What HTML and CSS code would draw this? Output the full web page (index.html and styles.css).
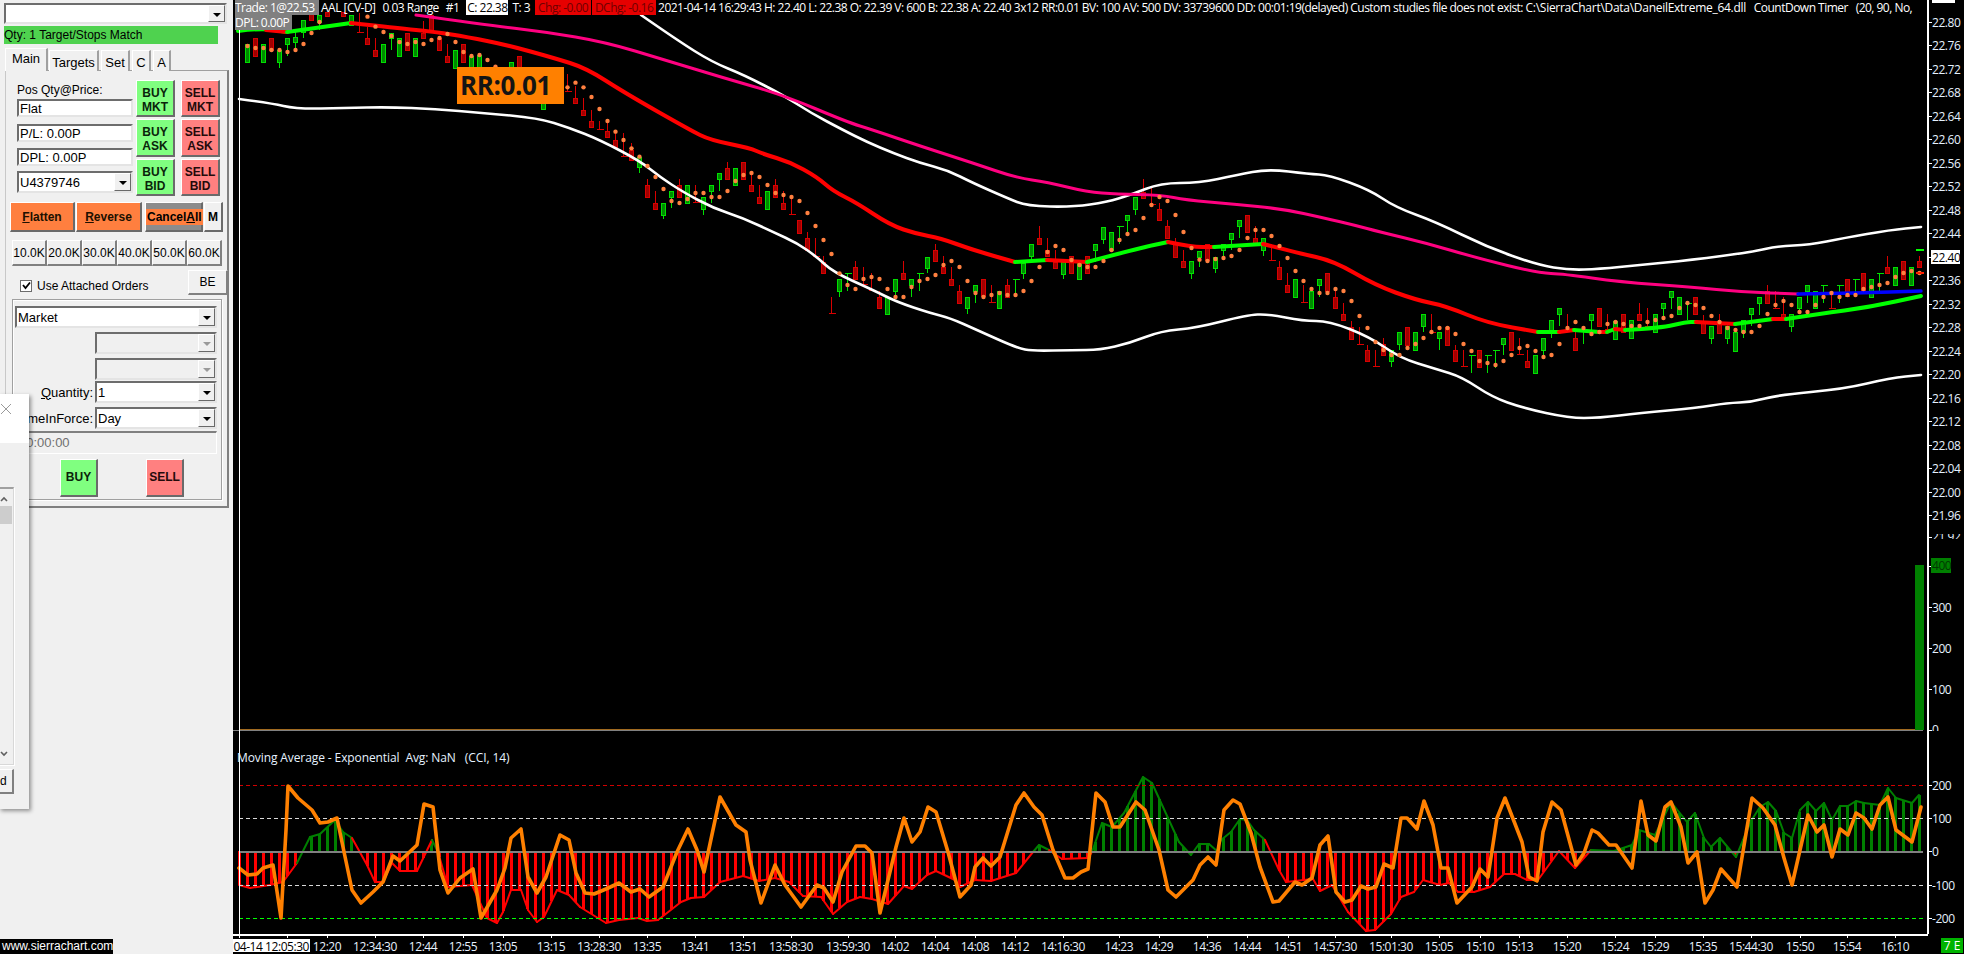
FILE: index.html
```html
<!DOCTYPE html>
<html lang="en">
<head>
<meta charset="utf-8">
<title>Sierra Chart AAL</title>
<link rel="stylesheet" href="styles.css">
</head>
<body>
<aside class="side">
  <div class="combo combo-top"><span class="combo-text"></span><span class="arrow"></span></div>
  <div class="status">Qty: 1 Target/Stops Match</div>
  <div class="tabs">
    <span class="tab tab-active tab-main">Main</span>
    <span class="tab tab-targets">Targets</span>
    <span class="tab tab-set">Set</span>
    <span class="tab tab-c">C</span>
    <span class="tab tab-a">A</span>
  </div>
  <div class="tabpanel">
    <div class="trade">
      <div class="trade-left">
        <div class="pos-label">Pos Qty@Price:</div>
        <div class="field field-flat">Flat</div>
        <div class="field field-pl">P/L: 0.00P</div>
        <div class="field field-dpl">DPL: 0.00P</div>
        <div class="combo combo-acct"><span class="combo-text">U4379746</span><span class="arrow"></span></div>
      </div>
      <div class="btn-col">
        <div class="tbtn buy">BUY<br>MKT</div>
        <div class="tbtn buy">BUY<br>ASK</div>
        <div class="tbtn buy">BUY<br>BID</div>
      </div>
      <div class="btn-col">
        <div class="tbtn sell">SELL<br>MKT</div>
        <div class="tbtn sell">SELL<br>ASK</div>
        <div class="tbtn sell">SELL<br>BID</div>
      </div>
    </div>
    <div class="actions">
      <div class="abtn orange flatten"><u>F</u>latten</div>
      <div class="abtn orange reverse"><u>R</u>everse</div>
      <div class="abtn cancel"><span class="cancel-text">Cancel<u>A</u>ll</span></div>
      <div class="abtn mbtn">M</div>
    </div>
    <div class="sizes">
      <div class="size">10.0K</div><div class="size">20.0K</div><div class="size">30.0K</div>
      <div class="size">40.0K</div><div class="size">50.0K</div><div class="size">60.0K</div>
    </div>
    <div class="attach">
      <span class="check"><svg width="9" height="9" viewBox="0 0 9 9"><path d="M1 4l2.5 3L8 1.5" fill="none" stroke="#000" stroke-width="1.8"/></svg></span>
      <span class="attach-label">Use Attached Orders</span>
      <div class="size be">BE</div>
    </div>
    <div class="group">
      <div class="combo combo-market"><span class="combo-text">Market</span><span class="arrow"></span></div>
      <div class="row"><div class="combo combo-small off"><span class="combo-text"></span><span class="arrow"></span></div></div>
      <div class="row"><div class="combo combo-small off"><span class="combo-text"></span><span class="arrow"></span></div></div>
      <div class="row row-qty"><span class="row-label"><u>Q</u>uantity:</span><div class="combo combo-small"><span class="combo-text">1</span><span class="arrow"></span></div></div>
      <div class="row row-tif"><span class="row-label">TimeInForce:</span><div class="combo combo-small"><span class="combo-text">Day</span><span class="arrow"></span></div></div>
      <div class="time">00:00:00</div>
      <div class="send">
        <div class="tbtn buy big">BUY</div>
        <div class="tbtn sell big">SELL</div>
      </div>
    </div>
  </div>
  <div class="dialog">
    <div class="dialog-head">
      <svg class="dialog-x" width="12" height="12" viewBox="0 0 12 12"><path d="M1 1l10 10M11 1L1 11" stroke="#9a9a9a" stroke-width="1" fill="none"/></svg>
    </div>
    <div class="dialog-body">
      <div class="dialog-list">
        <svg class="chev" width="8" height="6" viewBox="0 0 8 6"><path d="M1 5l3-3 3 3" stroke="#606060" stroke-width="1.6" fill="none"/></svg>
        <div class="thumb"></div>
        <svg class="chev chev-down" width="8" height="6" viewBox="0 0 8 6"><path d="M1 1l3 3 3-3" stroke="#606060" stroke-width="1.6" fill="none"/></svg>
      </div>
      <div class="dialog-btn">d</div>
    </div>
  </div>
  <div class="brand">www.sierrachart.com</div>
</aside>
<main class="chart">
  <svg id="plot" class="plot" width="1731" height="954" viewBox="233 0 1731 954"></svg>
  <div class="head">
    <span class="h-gray h-trade">Trade: 1@22.53</span>
    <span class="h-aal">AAL [CV-D]</span>
    <span class="h-range">0.03 Range</span>
    <span class="h-num">#1</span>
    <span class="h-close">C: 22.38</span>
    <span class="h-t">T: 3</span>
    <span class="h-chg">Chg: -0.00</span>
    <span class="h-chg h-dchg">DChg: -0.16</span>
    <span class="h-rest">2021-04-14 16:29:43 H: 22.40 L: 22.38 O: 22.39 V: 600 B: 22.38 A: 22.40 3x12 RR:0.01 BV: 100 AV: 500 DV: 33739600 DD: 00:01:19(delayed) Custom studies file does not exist: <span class="h-path">C:\SierraChart\Data\DaneilExtreme_64.dll</span>&nbsp;&nbsp; CountDown Timer&nbsp;&nbsp; (20, 90, No,</span>
  </div>
  <div class="h-gray h-dpl">DPL: 0.00P</div>
  <div class="rr">RR:0.01</div>
  <div class="study">Moving Average - Exponential&nbsp; Avg: NaN&nbsp;&nbsp; (CCI, 14)</div>
  <div class="price-flag"></div>
  <div class="corner">7 E</div>
</main>
<script src="chart.js"></script>
</body>
</html>
```
FILE: styles.css
```css
* { box-sizing: border-box; }
html, body { margin: 0; padding: 0; }
body { display: flex; width: 1964px; height: 954px; overflow: hidden; background: #000; font: 12px "Liberation Sans", Arial, sans-serif; color: #000; }
.side { position: relative; flex: 0 0 233px; height: 954px; background: #f0f0f0; display: flex; flex-direction: column; align-items: flex-start; overflow: hidden; }
u { text-decoration: underline; }

.combo { display: flex; align-items: stretch; background: #fff; border: 2px solid #6d6d6d; border-right-color: #e4e4e4; border-bottom-color: #e4e4e4; }
.combo-text { flex: 1; padding: 2px 0 0 1px; font-size: 13px; line-height: 16px; white-space: nowrap; }
.arrow { position: relative; flex: 0 0 17px; background: #f0f0f0; border: 1px solid #fff; border-right-color: #696969; border-bottom-color: #696969; }
.arrow::after { content: ""; position: absolute; left: 4px; top: 7px; border: 4px solid transparent; border-top: 4px solid #000; border-bottom: 0; }
.off { background: #f0f0f0; }
.off .arrow::after { border-top-color: #9a9a9a; }
.combo-top { margin: 3px 0 0 4px; width: 223px; height: 21px; }
.status { margin: 2px 0 0 4px; width: 214px; height: 18px; background: #4fd24f; font-size: 12px; line-height: 18px; white-space: nowrap; }

.tabs { display: flex; align-items: flex-end; height: 22px; margin: 5px 0 0 5px; gap: 1px; position: relative; z-index: 1; }
.tab { height: 21px; background: #f0f0f0; border: 1px solid #a0a0a0; border-top-color: #fff; border-left-color: #fff; border-bottom: 0; border-right-width: 2px; font-size: 13px; line-height: 23px; text-align: center; }
.tab-active { height: 23px; line-height: 20px; }
.tab-main { width: 43px; }
.tab-targets { width: 50px; }
.tab-set { width: 29px; margin-left: 1px; }
.tab-c { width: 19px; margin-left: 1px; }
.tab-a { width: 18px; margin-left: 1px; }

.tabpanel { margin: -1px 0 0 5px; width: 224px; height: 438px; border: 1px solid #c8c8c8; border-right: 2px solid #808080; border-bottom: 2px solid #808080; border-top-color: #a0a0a0; display: flex; flex-direction: column; align-items: flex-start; }

.trade { display: flex; margin: 9px 0 0 11px; height: 116px; }
.trade-left { width: 116px; display: flex; flex-direction: column; }
.pos-label { height: 19px; font-size: 12px; line-height: 21px; }
.field { width: 116px; height: 18px; background: #fff; border: 2px solid #6d6d6d; border-right-color: #e4e4e4; border-bottom-color: #e4e4e4; font-size: 13px; line-height: 15px; padding-left: 1px; white-space: nowrap; }
.field-pl { margin-top: 7px; }
.field-dpl { margin-top: 6px; }
.combo-acct { margin-top: 5px; width: 116px; height: 22px; }
.btn-col { display: flex; flex-direction: column; gap: 2px; width: 39px; margin-left: 3px; }
.btn-col + .btn-col { margin-left: 6px; }
.tbtn { height: 37.5px; border: 1px solid #fff; border-right: 2px solid #6a6a6a; border-bottom: 2px solid #6a6a6a; font: bold 12px/14px "Liberation Sans", Arial, sans-serif; text-align: center; padding-top: 5px; }
.buy { background: #80ff80; color: #0a240a; }
.sell { background: #ff8080; color: #240a0a; }

.actions { display: flex; margin: 6px 0 0 4px; height: 30px; }
.abtn { height: 30px; border: 1px solid #fff; border-right: 2px solid #6a6a6a; border-bottom: 2px solid #6a6a6a; font: bold 12px/28px "Liberation Sans", Arial, sans-serif; text-align: center; background: #f0f0f0; }
.orange { background: #ff7f3f; color: #201000; }
.flatten { width: 65px; margin-right: 1px; }
.reverse { width: 66px; margin-right: 3px; }
.cancel { width: 58px; margin-right: 1px; background: #8c8c8c; }
.cancel-text { background: #ff7f3f; padding: 1px 1px; }
.mbtn { width: 19px; }

.sizes { display: flex; margin: 8px 0 0 6px; }
.size { width: 35px; height: 26px; background: #f0f0f0; border: 1px solid #fff; border-right: 2px solid #808080; border-bottom: 2px solid #808080; font-size: 12px; line-height: 25px; text-align: center; white-space: nowrap; }

.attach { position: relative; display: flex; align-items: center; width: 216px; margin: 4px 0 0 6px; height: 25px; }
.check { width: 12px; height: 12px; margin: 6px 0 0 8px; background: #fff; border: 1px solid #6d6d6d; display: flex; align-items: center; justify-content: center; }
.attach-label { margin: 6px 0 0 5px; font-size: 12px; }
.be { width: 40px; height: 25px; margin-left: auto; line-height: 22px; }

.group { width: 210px; height: 201px; margin: 4px 0 0 6px; border: 1px solid #a0a0a0; box-shadow: inset 1px 1px 0 #fff, 1px 1px 0 #fff; padding: 6px 0 0 2px; display: flex; flex-direction: column; }
.combo-market { width: 202px; height: 22px; }
.row { display: flex; justify-content: flex-end; align-items: center; gap: 2px; width: 202px; margin-top: 4px; }
.row-qty { margin-top: 1px; }
.row-label { font-size: 13px; white-space: nowrap; }
.combo-small { width: 122px; height: 22px; flex: none; }
.time { width: 202px; height: 23px; margin-top: 2px; border: 1px solid #c8c8c8; border-right-color: #fff; border-bottom-color: #fff; border-top: 2px solid #808080; color: #6f6f6f; font-size: 13px; line-height: 20px; padding-left: 3px; }
.send { display: flex; margin-top: 5px; padding-left: 45px; gap: 48px; }
.big { width: 38px; height: 38px; padding-top: 10px; font-size: 12px; }

.dialog { position: absolute; left: -1px; top: 394px; width: 30px; height: 415px; background: #f0f0f0; box-shadow: 2px 2px 4px rgba(0,0,0,.4); display: flex; flex-direction: column; overflow: hidden; }
.dialog-head { height: 49px; background: #fff; position: relative; }
.dialog-x { position: absolute; left: 1px; top: 9px; }
.dialog-body { padding-top: 44px; display: flex; flex-direction: column; }
.dialog-list { position: relative; width: 15px; height: 278px; border: 1px solid #d8d8d8; border-left: 0; border-top: 2px solid #a0a0a0; background: #f0f0f0; box-shadow: 1px 1px 0 #fff; }
.chev { position: absolute; left: 1px; top: 7px; }
.chev-down { top: auto; bottom: 7px; }
.thumb { position: absolute; left: 0; top: 17px; width: 13px; height: 18px; background: #cdcdcd; }
.dialog-btn { width: 15px; height: 25px; margin-top: 4px; border: 1px solid #fff; border-left: 0; border-right: 2px solid #808080; border-bottom: 2px solid #808080; font-size: 12px; line-height: 22px; padding-left: 1px; }

.brand { position: absolute; left: 0; top: 939px; width: 113px; height: 15px; background: #000; color: #fff; font-size: 12px; line-height: 15px; white-space: nowrap; padding-left: 2px; }

.chart { position: relative; flex: 1; height: 954px; background: #000; overflow: hidden; }
.plot { display: block; }
.plot text { font: 12px "Open Sans", sans-serif; fill: #e6f2ff; letter-spacing: -.45px; }
.plot .tm { text-anchor: middle; fill: #e8f2ff; }
.plot .t-first { fill: #000; text-anchor: end; }

.head { position: absolute; left: 2px; top: 0; width: 1692px; height: 16px; overflow: hidden; display: flex; color: #fff; font: 12px/15px "Open Sans", sans-serif; letter-spacing: -.52px; white-space: pre; }
.head > span { flex: none; }
.h-gray { background: #808080; color: #fff; }
.h-trade { width: 84px; height: 15px; }
.h-aal { margin-left: 2px; }
.h-range { margin-left: 7px; }
.h-num { margin-left: 7px; }
.h-close { margin-left: 7px; width: 42px; height: 15px; background: #fff; color: #000; text-align: center; }
.h-t { margin-left: 4px; }
.h-chg { margin-left: 5px; width: 56px; height: 15px; background: #e60000; color: #700000; text-align: center; }
.h-dchg { margin-left: 1px; width: 64px; }
.h-rest { margin-left: 2px; }
.h-path { letter-spacing: -.28px; }
.h-dpl { position: absolute; left: 2px; top: 15px; width: 57px; height: 15px; font: 12px/15px "Open Sans", sans-serif; letter-spacing: -.52px; }

.rr { position: absolute; left: 224px; top: 67px; width: 107px; height: 37px; background: #ff8000; color: #141414; font: 700 26px/36px "Open Sans", sans-serif; letter-spacing: -.4px; padding-left: 3px; white-space: nowrap; }
.study { position: absolute; left: 4px; top: 750px; color: #e6f2ff; font: 12px/16px "Open Sans", sans-serif; letter-spacing: -.1px; white-space: pre; }
.price-flag { position: absolute; left: 1699px; top: 0; width: 23px; height: 3px; background: #fff; }
.corner { position: absolute; left: 1708px; top: 938px; width: 22px; height: 15px; background: #00b400; color: #fff; font: 12px/15px "Open Sans", sans-serif; text-align: center; }
```
FILE: chart.js
```js
(function () {
  var svg = document.getElementById('plot');
  var out = [];
  function cx(i) { return 239.5 + 8 * i; }
  function line(x1, y1, x2, y2, c, w, extra) {
    out.push('<line x1="' + x1 + '" y1="' + y1 + '" x2="' + x2 + '" y2="' + y2 + '" stroke="' + c + '" stroke-width="' + (w || 1) + '" shape-rendering="crispEdges"' + (extra || '') + '/>');
  }
  function rect(x, y, w, h, f, s) {
    out.push('<rect x="' + x + '" y="' + y + '" width="' + w + '" height="' + h + '" fill="' + f + '"' + (s ? ' stroke="' + s + '"' : '') + ' shape-rendering="crispEdges"/>');
  }
  function poly(pts, c, w) {
    out.push('<polyline points="' + pts.map(function (p) { return p[0] + ',' + p[1]; }).join(' ') + '" fill="none" stroke="' + c + '" stroke-width="' + w + '" stroke-linejoin="round" stroke-linecap="round"/>');
  }
  /* curved line: quadratic segments through the midpoints of the traced points */
  function curve(pts, c, w) {
    if (pts.length < 3) return poly(pts, c, w);
    var d = 'M' + pts[0][0] + ' ' + pts[0][1];
    for (var k = 1; k < pts.length - 1; k++) {
      var mx = (pts[k][0] + pts[k + 1][0]) / 2, my = (pts[k][1] + pts[k + 1][1]) / 2;
      d += 'Q' + pts[k][0] + ' ' + pts[k][1] + ' ' + mx + ' ' + my;
    }
    var e = pts[pts.length - 1];
    d += 'L' + e[0] + ' ' + e[1];
    out.push('<path d="' + d + '" fill="none" stroke="' + c + '" stroke-width="' + w + '" stroke-linecap="round"/>');
  }
  function candle(i, t, top, bot, wt, wb) {
    var x = Math.floor(cx(i)) + 0.5, green = t === 'g' || t === 'G';
    var c = green ? '#00e000' : '#d80000', f = green ? '#008a00' : '#a00000';
    if (t === 'G' || t === 'R') {
      line(x, top, x, bot, c);
      if (t === 'G') line(x - 3, top + 0.5, x + 4, top + 0.5, c);
      else line(x - 3, bot - 0.5, x + 4, bot - 0.5, c);
      return;
    }
    if (wt) line(x, wt, x, top, c);
    if (wb) line(x, bot, x, wb, c);
    rect(x - 2, Math.round(top) + 0.5, 4, Math.round(bot - top), f, c);
  }

  /* upper left stretch: index, type, top, bottom, wick top, wick bottom (zoomed y / 3) */
  var A = [[1,'g',132,186],[2,'r',114,168],[3,'g',132,186],[4,'r',114,150],[5,'g',150,186,0,204],[6,'g',114,132,0,168],[7,'g',110,126,96,150],[8,'g',60,96,0,114],[9,'r',40,60],[10,'g',45,66,0,90],[11,'r',36,48],[13,'r',36,48],[14,'g',45,75],[15,'R',40,100],[16,'r',114,132,80],[17,'r',150,168,114],[18,'g',132,186],[19,'g',100,114,0,150],[20,'g',114,168],[21,'r',100,150],[22,'g',114,168],[23,'r',100,114,62],[24,'r',45,95],[25,'r',114,150],[26,'r',168,186,132],[27,'g',150,204],[28,'r',132,186],[29,'g',168,204],[30,'g',165,200],[34,'g',186,204],[35,'r',168,204],[38,'g',310,328],[41,'R',222,277],[42,'r',294,310,258],[43,'r',330,346,294],[44,'r',364,382,330],[45,'R',364,390]];
  A.forEach(function (c) { candle(c[0], c[1], c[2] / 3, c[3] / 3, c[4] ? c[4] / 3 : 0, c[5] ? c[5] / 3 : 0); });
  [[46,'r',392,410,360],[47,'r',420,440,395],[48,'R',400,470],[49,'r',450,480,430],[50,'g',470,500,0,520]].forEach(function (c) { candle(c[0], c[1], c[2] / 3, c[3] / 3, c[4] ? c[4] / 3 : 0, c[5] ? c[5] / 3 : 0); });

  /* middle stretch from index 51 */
  var B = [['r',166,202,148],['r',220,238,184],['g',220,256,0,268],['g',184,202,0,235],['r',166,202,148],['g',166,220],['R',166,220],['g',202,238,0,255],['g',166,184,0,220],['g',130,148,0,184],['r',114,148,96],['g',114,166],['r',96,148],['r',166,184,130],['r',202,220,166],['g',184,238],['r',166,202,148],['r',220,238,184],['R',202,256],['r',270,308],['r',324,360,306],['R',324,380],['r',396,430,378],['R',502,552],['g',448,484,0,500],['G',430,484],['r',412,448,394],['R',412,466],['R',430,484],['r',502,536,484],['g',502,554],['g',448,484,0,500],['r',430,448,394],['g',448,466,0,500],['G',430,484],['g',380,412,0,430],['r',360,394,342],['r',412,430,378],['r',448,466,412],['r',484,520,466],['g',502,536,0,552],['g',466,484,0,518],['r',448,500],['R',466,520],['g',484,536],['r',466,502,448],['G',448,500],['g',400,430,0,446],['g',343,380,0,395],['r',325,343,289],['r',360,378,325],['r',395,412,360],['g',395,430,0,446],['r',378,430],['g',400,448],['r',378,430],['g',343,360,0,395],['g',290,325,0,342],['g',307,360],['G',289,342],['g',256,271,0,307],['g',202,238,0,255]];
  B.forEach(function (c, k) { candle(51 + k, c[0], 130 + c[1] / 3, 130 + c[2] / 3, c[3] ? 130 + c[3] / 3 : 0, c[4] ? 130 + c[4] / 3 : 0); });

  /* right stretch from index 113 */
  var C = [['r',125,143,87],['R',115,165],['r',178,212,160],['r',229,266,210],['r',275,320,265],['r',334,352,300],['g',334,370,0,386],['g',302,320,0,350],['r',283,330],['g',320,352,0,368],['g',283,302,0,320],['g',248,266,0,300],['g',211,230,0,265],['r',196,248],['r',265,280,228],['g',265,302,0,318],['R',283,334],['r',352,388,334],['r',405,425,370],['g',388,443],['R',405,460],['g',424,476],['g',388,407,0,440],['r',370,425],['r',442,476,424],['r',493,512,460],['r',530,566,512],['R',530,584],['r',601,635,584],['R',601,652],['r',583,617,565],['g',601,635,0,652],['g',547,584,0,600],['r',530,584],['g',547,602],['g',493,530,0,546],['R',493,550],['g',547,566,0,600],['r',530,584],['r',601,635,584],['R',601,652],['G',616,670],['r',601,653],['G',616,670],['G',601,654],['g',565,584,0,615],['r',547,602],['R',565,616],['r',634,652,600],['g',616,670],['g',565,602,0,616],['g',511,546,0,565],['g',475,493,0,528],['R',493,540],['r',565,602,546],['G',540,582],['g',493,511,0,540],['r',475,530],['R',492,540],['g',512,566],['r',493,548],['g',511,566],['r',493,511,460],['R',475,530],['g',493,548],['g',460,476,0,510],['g',424,443,0,476],['g',442,494],['G',460,510],['r',442,494],['r',512,548,494],['g',529,566,0,582],['r',512,548,492],['g',529,566,0,582],['g',546,602],['g',511,546,0,564],['g',475,493,0,528],['g',442,460,0,494],['r',424,460,405],['R',424,476],['r',493,511,440],['g',493,528,0,545],['g',442,476,0,493],['g',406,424,0,458],['g',424,476],['G',406,458],['R',424,476],['G',406,458],['r',388,440],['G',388,440],['r',370,425],['g',388,442],['G',370,424],['r',352,370,318],['g',352,405],['r',334,388],['g',352,406],['r',334,352,318]];
  C.forEach(function (c, k) { candle(113 + k, c[0], 150 + c[1] / 3, 150 + c[2] / 3, c[3] ? 150 + c[3] / 3 : 0, c[4] ? 150 + c[4] / 3 : 0); });

  /* volume bar and baselines */
  rect(1915, 565, 9, 165, '#008000');
  line(239, 729.5, 1915, 729.5, '#a06a20');
  line(233, 730.5, 1923, 730.5, '#808080');

  /* bands */
  var upper = [[641,15],[677,40],[712,62],[744,75],[783,95],[811,113],[843,130],[867,142],[893,153],[920,163],[947,170],[973,183],[1007,198],[1027,206],[1073,207],[1107,202],[1130,195],[1161,183],[1199,183],[1237,175],[1268,169],[1309,174],[1329,175],[1370,190],[1395,207],[1436,222],[1487,247],[1538,265],[1569,270],[1599,269],[1640,265],[1691,260],[1752,252],[1778,246],[1809,245],[1844,238],[1890,230],[1921,227]];
  var lower = [[239,99],[270,103],[297,109],[345,108],[388,107],[435,109],[483,113],[538,118],[570,128],[600,140],[640,161],[660,177],[683,192],[713,208],[743,218],[773,232],[797,243],[817,257],[833,272],[873,290],[897,302],[930,313],[950,318],[977,330],[1017,348],[1033,351],[1073,350],[1100,350],[1130,343],[1161,331],[1196,328],[1247,315],[1268,314],[1303,321],[1329,321],[1370,337],[1400,358],[1436,369],[1462,377],[1492,397],[1523,408],[1569,418],[1599,418],[1640,413],[1696,408],[1727,403],[1752,402],[1778,395],[1844,389],[1890,378],[1921,375]];
  curve(upper, '#ffffff', 2.6);
  curve(lower, '#ffffff', 2.6);
  curve([[416,15],[487,25],[546,32],[605,42],[665,60],[724,78],[783,95],[847,122],[873,130],[923,147],[973,163],[1017,178],[1047,182],[1087,192],[1117,194],[1161,195],[1186,200],[1232,204],[1283,209],[1324,218],[1354,225],[1380,232],[1426,243],[1477,258],[1538,273],[1564,274],[1620,282],[1691,287],[1742,292],[1798,294]], '#ff0080', 3);
  poly([[1798,294],[1854,293],[1890,292],[1921,291]], '#0000ff', 3.4);

  var GR = '#00ff00', RD = '#ff0000';
  [[GR,[[238,31],[262,28],[287,32]]],[RD,[[266,30],[287,32]]],[GR,[[287,32],[351,23]]],
   [RD,[[351,23],[396,28],[436,32],[467,37],[507,45],[554,58],[586,68],[625,93],[690,130],[710,140],[750,148],[763,154],[790,162],[817,177],[833,191],[857,203],[890,225],[917,234],[940,238],[973,250],[1015,262]]],
   [GR,[[1015,262],[1047,260]]],[RD,[[1047,260],[1087,262]]],[GR,[[1087,262],[1140,248],[1168,242]]],
   [RD,[[1168,242],[1191,247],[1214,247]]],[GR,[[1214,247],[1263,244]]],
   [RD,[[1263,244],[1298,253],[1334,261],[1375,285],[1416,300],[1446,306],[1487,323],[1538,332]]],
   [GR,[[1538,332],[1559,332]]],[RD,[[1559,332],[1574,330]]],[GR,[[1574,330],[1599,332]]],[RD,[[1599,332],[1607,332]]],[GR,[[1607,332],[1615,329]]],[RD,[[1615,329],[1625,330]]],
   [GR,[[1625,330],[1661,328],[1686,322],[1696,322]]],[RD,[[1696,322],[1735,324]]],[GR,[[1735,324],[1773,319]]],[RD,[[1773,319],[1786,319]]],[GR,[[1786,319],[1819,314],[1870,307],[1921,296]]]
  ].forEach(function (s) { curve(s[1], s[0], 4); });

  /* dots */
  function dot(x, y) { out.push('<circle cx="' + x + '" cy="' + y + '" r="2.2" fill="#ff8040"/>'); }
  [[1,138],[2,144],[3,144],[4,150],[5,150],[6,156],[7,150],[8,132],[9,99],[10,66],[16,50],[17,80],[18,96],[19,108],[20,126],[21,132],[22,126],[23,132],[24,120],[25,114],[26,102],[27,126],[28,156],[29,168],[30,165],[31,180],[32,200],[41,262],[42,248],[43,262],[44,291],[45,327],[46,363],[47,395],[48,420],[49,445],[50,470]].forEach(function (d) { dot(cx(d[0]), d[1] / 3); });
  [108,141,177,213,219,207,189,189,201,201,183,153,135,129,141,165,189,195,201,213,249,288,330,372,430,465,477,447,441,447,477,501,501,471,453,447,435,405,393,411,453,489,501,495,489,495,495,483,453,411,366,348,360,390,405,411,411,393,360,330,312,300].forEach(function (y, k) { dot(cx(51 + k), 130 + y / 3); });
  [204,165,141,153,195,246,294,329,333,327,324,318,300,264,240,240,258,288,324,363,393,417,429,429,417,423,453,498,534,576,600,615,615,594,582,564,546,534,534,552,582,603,633,639,645,633,615,594,588,603,621,615,582,534,516,534,552,546,522,516,522,528,528,516,510,504,498,474,459,465,474,498,516,534,540,546,546,528,492,465,453,465,486,486,465,441,429,441,435,435,417,411,405,399,381,369,363,369].forEach(function (y, k) { dot(cx(113 + k), 150 + y / 3); });
  line(1916, 250, 1924, 250, '#00ff00', 2);
  line(1916, 273, 1924, 273, '#ff2000', 2);

  /* CCI panel */
  var dash = ' stroke-dasharray="4 3"';
  var avg = [[239,885],[250,888],[270,885],[283,882],[297,863],[310,837],[320,834],[335,820],[343,832],[352,838],[367,865],[375,882],[383,882],[392,863],[400,871],[417,871],[432,840],[438,852],[448,887],[472,885],[487,918],[497,923],[503,912],[511,890],[521,890],[528,910],[537,922],[544,917],[557,890],[569,895],[580,907],[606,923],[619,920],[638,918],[647,921],[658,920],[681,902],[691,898],[704,897],[720,882],[743,876],[759,881],[775,878],[789,882],[803,896],[821,897],[833,914],[847,902],[860,897],[872,899],[888,904],[904,886],[912,889],[927,875],[936,871],[955,880],[960,887],[975,880],[991,881],[1016,873],[1033,852],[1039,845],[1049,850],[1062,859],[1088,858],[1092,852],[1102,823],[1112,827],[1124,813],[1143,777],[1152,783],[1179,842],[1191,855],[1199,844],[1209,844],[1217,851],[1221,840],[1231,832],[1240,819],[1247,820],[1254,830],[1265,840],[1279,870],[1286,882],[1313,879],[1320,891],[1332,885],[1348,912],[1366,931],[1375,930],[1391,914],[1401,897],[1414,892],[1423,880],[1440,885],[1449,883],[1458,892],[1474,892],[1490,887],[1504,874],[1515,874],[1527,880],[1538,880],[1559,851],[1575,868],[1591,850],[1614,851],[1632,845],[1639,830],[1655,835],[1671,802],[1687,822],[1695,813],[1704,838],[1711,847],[1720,838],[1736,857],[1751,821],[1760,807],[1768,802],[1776,811],[1784,833],[1792,838],[1800,810],[1808,802],[1816,811],[1824,803],[1832,820],[1840,806],[1848,806],[1856,801],[1864,803],[1880,805],[1888,788],[1896,798],[1912,803],[1919,795]];
  function avgAt(x) {
    for (var k = 1; k < avg.length; k++) {
      if (x <= avg[k][0]) {
        var a = avg[k - 1], b = avg[k];
        return a[1] + (b[1] - a[1]) * (x - a[0]) / (b[0] - a[0]);
      }
    }
    return avg[avg.length - 1][1];
  }
  for (var i = 0; i <= 210; i++) {
    var x = cx(i), y = avgAt(x);
    if (Math.abs(y - 851) < 3) continue;
    if (y > 851) rect(Math.floor(x) - 1, 851, 3, Math.round(y - 851), '#ff0000');
    else rect(Math.floor(x) - 1, Math.round(y), 3, Math.round(851 - y), '#008000');
  }
  for (var k = 1; k < avg.length; k++) {
    var a = avg[k - 1], b = avg[k];
    poly([a, b], (a[1] + b[1]) / 2 > 851 ? '#ff0000' : '#008000', 2);
  }
  line(239, 785.5, 1923, 785.5, '#d00000', 1, dash);
  line(239, 818.5, 1923, 818.5, '#d8d8d8', 1, dash);
  line(239, 885.5, 1923, 885.5, '#d8d8d8', 1, dash);
  line(239, 918.5, 1923, 918.5, '#00ff00', 1, dash);
  line(239, 851.5, 1923, 851.5, '#808080', 2);
  poly([[239,868],[248,875],[257,874],[263,868],[273,865],[281,918],[286,830],[288,786],[298,798],[312,810],[320,823],[328,822],[337,818],[343,847],[352,890],[361,903],[373,892],[383,882],[393,856],[400,861],[417,845],[424,804],[433,807],[440,870],[448,893],[460,878],[473,869],[481,918],[497,890],[505,868],[511,838],[521,829],[528,877],[537,893],[546,877],[560,835],[569,840],[576,873],[585,893],[594,894],[606,889],[619,883],[631,892],[640,889],[649,897],[663,887],[677,852],[688,829],[697,850],[704,872],[720,797],[736,825],[746,832],[750,860],[761,903],[775,865],[785,885],[801,907],[817,885],[824,888],[833,902],[842,872],[856,846],[865,846],[872,853],[880,913],[896,847],[904,818],[912,842],[920,832],[928,807],[936,812],[948,852],[960,897],[971,885],[975,867],[983,858],[991,866],[1000,857],[1016,805],[1024,793],[1034,807],[1042,815],[1053,850],[1065,878],[1073,878],[1081,872],[1088,869],[1096,793],[1105,802],[1113,827],[1120,827],[1136,802],[1145,810],[1159,850],[1168,890],[1176,897],[1193,880],[1200,865],[1208,857],[1216,865],[1224,810],[1233,800],[1240,804],[1251,833],[1260,867],[1273,902],[1279,901],[1295,882],[1302,885],[1312,878],[1320,845],[1328,836],[1336,892],[1345,902],[1352,900],[1361,886],[1368,889],[1376,887],[1384,864],[1393,868],[1401,818],[1407,818],[1417,829],[1424,801],[1433,825],[1441,868],[1448,868],[1457,903],[1472,887],[1480,869],[1488,877],[1497,818],[1505,798],[1522,842],[1529,877],[1537,881],[1543,832],[1552,802],[1561,810],[1576,865],[1584,853],[1592,830],[1598,833],[1609,845],[1616,845],[1632,868],[1641,801],[1648,835],[1656,841],[1665,807],[1671,802],[1681,827],[1688,863],[1697,852],[1705,903],[1713,890],[1721,869],[1737,887],[1752,798],[1763,808],[1775,825],[1784,858],[1792,885],[1808,815],[1817,832],[1824,825],[1832,857],[1840,829],[1848,835],[1856,813],[1864,818],[1872,829],[1880,805],[1888,797],[1896,830],[1912,842],[1921,807]], '#ff8000', 3.6);

  /* frame */
  line(239.5, 0, 239.5, 934, '#ffffff');
  line(1927.5, 0, 1927.5, 934, '#ffffff', 2);
  line(233, 934.5, 1928, 934.5, '#ffffff', 2);

  /* price axis */
  function lab(txt, y, cls) {
    out.push('<text x="1932" y="' + (y + 4.5) + '"' + (cls ? ' class="' + cls + '"' : '') + '>' + txt + '</text>');
    line(1928, y, 1932, y, '#ffffff');
  }
  for (var n = 0; n <= 20; n++) {
    var v = (22.80 - 0.04 * n).toFixed(2), yy = Math.round(22 + 23.48 * n);
    if (n === 10) {
      rect(1931, yy - 7, 29, 14, '#ffffff');
      out.push('<text x="1932" y="' + (yy + 4.5) + '" style="fill:#000">' + v + '</text>');
      line(1928, yy, 1931, yy, '#ffffff');
    } else lab(v, yy);
  }
  lab('21.96', 515);
  out.push('<svg x="1932" y="534" width="30" height="5" viewBox="1932 534 30 5"><text x="1932" y="541">21.92</text></svg>');
  line(1928, 537, 1932, 537, '#ffffff');
  rect(1931, 558, 20, 15, '#008000');
  out.push('<text x="1932" y="570" style="fill:#003a00">400</text>');
  line(1928, 566, 1931, 566, '#ffffff');
  lab('300', 607); lab('200', 648); lab('100', 689);
  out.push('<svg x="1932" y="722" width="20" height="9" viewBox="1932 722 20 9"><text x="1932" y="734">0</text></svg>');
  line(1928, 730, 1932, 730, '#ffffff');
  lab('200', 785); lab('100', 818); lab('0', 851); lab('-100', 885); lab('-200', 918);

  /* time axis */
  rect(233, 939, 77, 13, '#ffffff');
  out.push('<text class="t-first" x="309" y="951">04-14 12:05:30</text>');
  line(287.5, 934, 287.5, 938, '#ffffff');
  [[239,''],[327,'12:20'],[375,'12:34:30'],[423,'12:44'],[463,'12:55'],[503,'13:05'],[551,'13:15'],[599,'13:28:30'],[647,'13:35'],[695,'13:41'],[743,'13:51'],[791,'13:58:30'],[848,'13:59:30'],[895,'14:02'],[935,'14:04'],[975,'14:08'],[1015,'14:12'],[1063,'14:16:30'],[1119,'14:23'],[1159,'14:29'],[1207,'14:36'],[1247,'14:44'],[1288,'14:51'],[1335,'14:57:30'],[1391,'15:01:30'],[1439,'15:05'],[1480,'15:10'],[1519,'15:13'],[1567,'15:20'],[1615,'15:24'],[1655,'15:29'],[1703,'15:35'],[1751,'15:44:30'],[1800,'15:50'],[1847,'15:54'],[1895,'16:10']].forEach(function (t) {
    line(t[0] + 0.5, 934, t[0] + 0.5, 938, '#ffffff');
    if (t[1]) out.push('<text class="tm" x="' + t[0] + '" y="951">' + t[1] + '</text>');
  });

  svg.innerHTML = out.join('');
})();
```
